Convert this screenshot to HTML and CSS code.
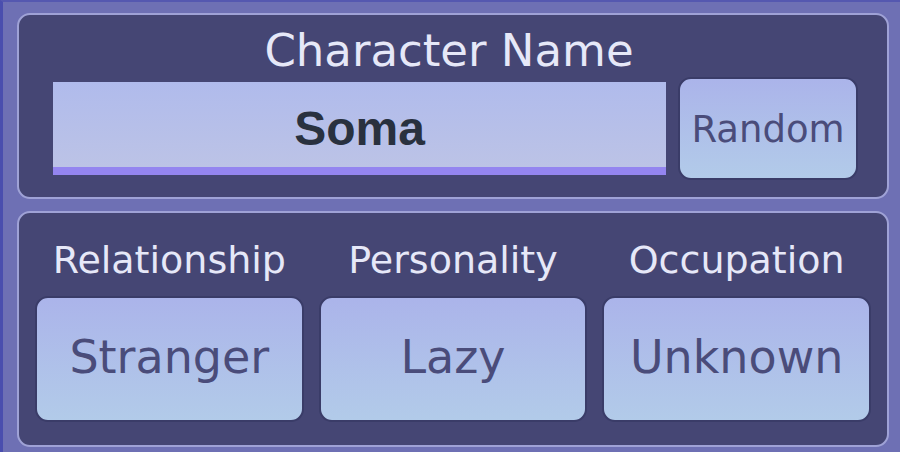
FILE: index.html
```html
<!DOCTYPE html>
<html lang="en">
<head>
    <meta charset="UTF-8">
    <meta name="viewport" content="width=device-width, initial-scale=1.0">
    <title>Character</title>
    <link rel="stylesheet" href="styles.css">
</head>
<body>
    <div class="frame">
        <div class="panel name-panel">
            <div class="panel-title">Character Name</div>
            <div class="name-row">
                <div class="name-input">Soma</div>
                <div class="btn random-btn">Random</div>
            </div>
        </div>
        <div class="panel traits-panel">
            <div class="trait">
                <div class="trait-label">Relationship</div>
                <div class="btn trait-btn">Stranger</div>
            </div>
            <div class="trait">
                <div class="trait-label">Personality</div>
                <div class="btn trait-btn">Lazy</div>
            </div>
            <div class="trait">
                <div class="trait-label">Occupation</div>
                <div class="btn trait-btn">Unknown</div>
            </div>
        </div>
    </div>
</body>
</html>
```

FILE: styles.css
```css
body {
    margin: 0;
    height: 452px;
    overflow: hidden;
    background: #6e70b4;
    font-family: "DejaVu Sans", sans-serif;
}
.frame {
    height: 100%;
    box-sizing: border-box;
    border-top: 2px solid #5558b0;
    border-left: 3px solid #4a4eae;
    padding: 11px 11px 0 14px;
    display: flex;
    flex-direction: column;
    gap: 12px;
}
.panel {
    background: #454674;
    border: 2px solid #9fa2d6;
    border-radius: 13px;
    box-sizing: border-box;
    width: 872px;
}
.name-panel {
    height: 186px;
    padding-top: 10px;
    display: flex;
    flex-direction: column;
    align-items: center;
}
.panel-title {
    color: #e6e8f8;
    font-size: 45px;
    line-height: 52px;
    height: 52px;
    margin-left: -8px;
}
.name-row {
    display: flex;
    align-items: center;
    gap: 12px;
    height: 103px;
    margin-left: 5px;
}
.name-input {
    width: 613px;
    height: 93px;
    box-sizing: border-box;
    background: linear-gradient(to bottom, #b0bbec, #bcc3e6);
    border-bottom: 8px solid #9485f0;
    display: flex;
    align-items: center;
    justify-content: center;
    font-family: "Liberation Sans", Arial, sans-serif;
    font-weight: bold;
    font-size: 48px;
    color: #29313f;
    padding-top: 8px;
}
.btn {
    box-sizing: border-box;
    background: linear-gradient(to bottom, #abb4ea, #b2cbe9);
    border: 2px solid #3a3c68;
    border-radius: 13px;
    color: #4a4c7a;
    display: flex;
    align-items: center;
    justify-content: center;
}
.random-btn {
    width: 180px;
    height: 103px;
    font-size: 37px;
    padding-top: 2px;
}
.traits-panel {
    height: 236px;
    padding: 0 16px 0 16px;
    display: flex;
    gap: 15px;
}
.trait {
    flex: 1;
    display: flex;
    flex-direction: column;
    align-items: center;
}
.trait-label {
    color: #e6e8f8;
    font-size: 38px;
    line-height: 44px;
    height: 44px;
    margin-top: 25px;
    margin-bottom: 14px;
}
.trait-btn {
    width: 100%;
    height: 126px;
    font-size: 46px;
    padding-bottom: 4px;
}
```
